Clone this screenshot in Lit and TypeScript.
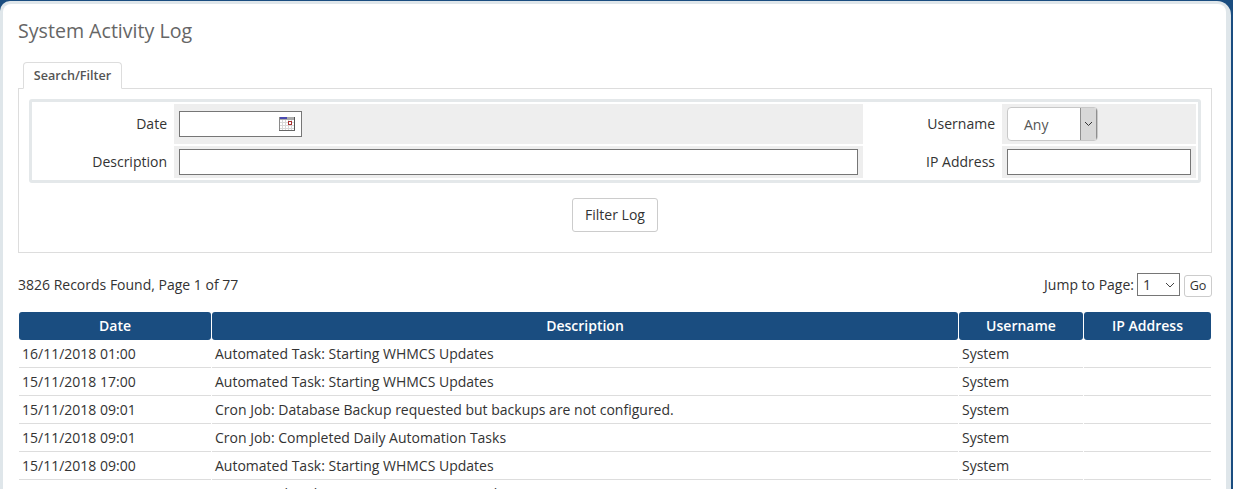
import { LitElement, html, css, svg } from "lit";
import { customElement } from "lit/decorators.js";

const rows = [
  ["16/11/2018 01:00", "Automated Task: Starting WHMCS Updates", "System"],
  ["15/11/2018 17:00", "Automated Task: Starting WHMCS Updates", "System"],
  ["15/11/2018 09:01", "Cron Job: Database Backup requested but backups are not configured.", "System"],
  ["15/11/2018 09:01", "Cron Job: Completed Daily Automation Tasks", "System"],
  ["15/11/2018 09:00", "Automated Task: Starting WHMCS Updates", "System"],
  ["15/11/2018 09:00", "Automated Task: Starting Domain Sync Tasks", "System"],
];

const calendar = svg`<svg class="cal" width="16" height="14" viewBox="0 0 16 14" shape-rendering="crispEdges">
  <rect x="0" y="0" width="16" height="14" fill="#fff"/>
  <path d="M1 5.5H15M1 8.5H15M1 11.5H15M3.5 3V14M6.5 3V14M9.5 3V14M12.5 3V14" stroke="#d8d8d8" fill="none"/>
  <rect x="0" y="0" width="16" height="3" fill="#aaa"/>
  <rect x="1" y="0" width="7" height="2" fill="#4a4ab0"/>
  <rect x="0" y="0" width="1" height="14" fill="#8a8a8a"/>
  <rect x="15" y="0" width="1" height="14" fill="#555"/>
  <rect x="0" y="13" width="16" height="1" fill="#666"/>
  <rect x="9.5" y="4.5" width="3" height="3" fill="#fff" stroke="#a33"/>
</svg>`;

@customElement("app-root")
export class AppRoot extends LitElement {
  static styles = css`
    :host {
      display: block;
      height: 489px;
      overflow: hidden;
      background: #1a4d80;
      font-family: "Open Sans", "DejaVu Sans", sans-serif;
      font-size: 14px;
      color: #333;
      padding: 1px 2px 0 0;
      box-sizing: border-box;
    }
    .outer {
      background: #dfe6ea;
      border-radius: 10px 14px 0 0;
      padding: 3px 5px 0 3px;
      height: 488px;
      box-sizing: border-box;
    }
    .panel {
      background: #fff;
      border-radius: 8px 8px 0 0;
      height: 485px;
      overflow: hidden;
      padding: 0 15px;
      box-sizing: border-box;
    }
    h1 {
      margin: 0;
      padding-top: 13px;
      height: 47px;
      box-sizing: border-box;
      font-size: 19.6px;
      line-height: 27px;
      font-weight: 400;
      color: #666;
    }
    .tabs { height: 26px; padding-left: 5px; display: flex; margin-top: 11px; position: relative; z-index: 1; }
    .tab {
      width: 99px;
      height: 27px;
      box-sizing: border-box;
      border: 1px solid #ddd;
      border-bottom: 1px solid #fff;
      border-radius: 4px 4px 0 0;
      background: #fff;
      font-size: 12.6px;
      font-weight: 600;
      color: #555;
      text-align: center;
      line-height: 25px;
    }
    .box {
      border: 1px solid #ddd;
      height: 165px;
      box-sizing: border-box;
      padding: 10px 10px 0 10px;
      margin-right: -1px;
    }
    .filter {
      border: 3px solid #e4e8ea;
      border-radius: 3px;
      height: 84px;
      box-sizing: border-box;
      display: grid;
      grid-template-columns: 142px 689px 139px 194px;
      grid-template-rows: 40px 32px;
      row-gap: 2px;
      padding-top: 2px;
      align-content: start;
    }
    .lbl { text-align: right; padding-right: 7px; line-height: 40px; color: #333; }
    .lbl.b { line-height: 32px; }
    .fld { background: #eee; display: flex; align-items: center; padding: 0 5px; box-sizing: border-box; }
    input.t {
      box-sizing: border-box;
      height: 26px;
      width: 100%;
      border: 1px solid #767676;
      background: #fff;
      margin: 0;
      padding: 0;
      display: block;
    }
    .date { width: 123px; height: 26px; border: 1px solid #767676; background: #fff; box-sizing: border-box; display: flex; justify-content: flex-end; align-items: center; padding-right: 6px; }
    .any {
      width: 91px;
      height: 34px;
      box-sizing: border-box;
      border: 1px solid #c8c8c8;
      border-radius: 4px;
      background: #fff;
      display: flex;
      overflow: hidden;
      color: #555;
    }
    .any span { flex: 1; padding-left: 16px; line-height: 33px; }
    .any i {
      width: 17px;
      box-sizing: border-box;
      border-left: 1px solid #8f8f8f;
      border-right: 1px solid #8f8f8f;
      background: #d8d8d8;
      display: flex;
      align-items: center;
      justify-content: center;
    }
    .btnrow { display: flex; justify-content: center; padding-top: 15px; }
    button {
      font: inherit;
      color: #333;
      background: #fff;
      border: 1px solid #ccc;
      border-radius: 3px;
      width: 86px;
      height: 34px;
      padding: 0 0 2px;
      margin: 0;
    }
    .pager {
      display: flex;
      justify-content: space-between;
      align-items: center;
      height: 31px;
      margin-top: 16px;
      margin-right: -1px;
    }
    .jump { display: flex; align-items: center; gap: 3px; }
    .sel {
      width: 43px;
      height: 23px;
      box-sizing: border-box;
      border: 1px solid #767676;
      background: #fff;
      display: flex;
      justify-content: space-between;
      align-items: center;
      padding: 0 4px 0 5px;
      margin-right: 1px;
    }
    .go {
      font-size: 12.6px;
      width: 28px;
      height: 22px;
      box-sizing: border-box;
      border: 1px solid #ccc;
      border-radius: 3px;
      text-align: center;
      line-height: 20px;
      margin-top: 3px;
    }
    .table { margin-top: 12px; margin-left: 1px; }
    .row {
      display: grid;
      grid-template-columns: 192px 746px 124px 127px;
      column-gap: 1px;
    }
    .head { height: 28px; }
    .head div {
      background: #1a4d80;
      color: #fff;
      font-weight: 600;
      text-align: center;
      line-height: 27px;
      border-radius: 3px;
    }
    .body { height: 28px; }
    .body div {
      border-bottom: 1px solid #ddd;
      padding-left: 3px;
      line-height: 27px;
      height: 28px;
      box-sizing: border-box;
      white-space: nowrap;
    }
  `;

  render() {
    return html`<div class="outer"><div class="panel">
      <h1>System Activity Log</h1>
      <div class="tabs"><div class="tab">Search/Filter</div></div>
      <div class="box">
        <div class="filter">
          <div class="lbl">Date</div>
          <div class="fld"><div class="date">${calendar}</div></div>
          <div class="lbl">Username</div>
          <div class="fld"><div class="any"><span>Any</span><i><svg width="9" height="6" viewBox="0 0 9 6"><path d="M1 1l3.5 3.5L8 1" fill="none" stroke="#333" stroke-width="1"/></svg></i></div></div>
          <div class="lbl b">Description</div>
          <div class="fld"><input class="t" type="text" /></div>
          <div class="lbl b">IP Address</div>
          <div class="fld"><input class="t" type="text" /></div>
        </div>
        <div class="btnrow"><button>Filter Log</button></div>
      </div>
      <div class="pager">
        <div>3826 Records Found, Page 1 of 77</div>
        <div class="jump">Jump to Page:
          <div class="sel"><span>1</span><svg width="10" height="6" viewBox="0 0 10 6"><path d="M1 1l4 4 4-4" fill="none" stroke="#444"/></svg></div>
          <div class="go">Go</div>
        </div>
      </div>
      <div class="table">
        <div class="row head"><div>Date</div><div>Description</div><div>Username</div><div>IP Address</div></div>
        ${rows.map((r) => html`<div class="row body"><div>${r[0]}</div><div>${r[1]}</div><div>${r[2]}</div><div></div></div>`)}
      </div>
    </div></div>`;
  }
}
